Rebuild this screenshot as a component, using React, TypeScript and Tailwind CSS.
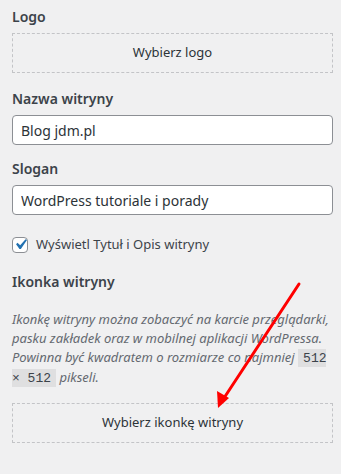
const Label = ({ children }: { children: React.ReactNode }) => (
  <div className="text-[14px] leading-[20px] font-semibold text-[#3c434a]">{children}</div>
);

const Picker = ({ children }: { children: React.ReactNode }) => (
  <div className="h-[40px] border border-dashed border-[#c3c4c7] flex items-center justify-center text-[13px] text-[#2c3338]">
    {children}
  </div>
);

const Field = ({ value }: { value: string }) => (
  <input
    readOnly
    value={value}
    className="w-full h-[30px] bg-white border border-[#8c8f94] rounded-[4px] px-[8px] text-[14px] text-[#2c3338] focus:outline-none"
  />
);

export default function App() {
  return (
    <div
      className="relative w-[341px] h-[474px] bg-[#f0f0f1] pl-[12px] pr-[8px] pt-[7px]"
      style={{ fontFamily: '"Noto Sans", "Open Sans", sans-serif' }}
    >
      <Label>Logo</Label>
      <div className="mt-[6px]">
        <Picker>Wybierz logo</Picker>
      </div>

      <div className="mt-[16px]">
        <Label>Nazwa witryny</Label>
      </div>
      <div className="mt-[6px]">
        <Field value="Blog jdm.pl" />
      </div>

      <div className="mt-[14px]">
        <Label>Slogan</Label>
      </div>
      <div className="mt-[6px]">
        <Field value="WordPress tutoriale i porady" />
      </div>

      <label className="mt-[20px] flex items-center gap-[8px] text-[13px] text-[#3c434a]">
        <span className="w-[16px] h-[16px] bg-white border border-[#8c8f94] rounded-[4px] flex items-center justify-center">
          <svg width="21" height="21" viewBox="0 0 20 20" className="-m-[3px] shrink-0">
            <path d="M14.83 4.89l1.34.94-5.81 8.38H9.02L5.78 9.67l1.34-1.25 2.57 2.4z" fill="#2271b1" />
          </svg>
        </span>
        Wyświetl Tytuł i Opis witryny
      </label>

      <div className="mt-[17px]">
        <Label>Ikonka witryny</Label>
      </div>
      <p className="mt-[18px] text-[13px] leading-[19px] italic text-[#646970]">
        Ikonkę witryny można zobaczyć na karcie przeglądarki, pasku zakładek oraz w mobilnej aplikacji WordPressa.
        Powinna być kwadratem o rozmiarze co najmniej{' '}
        <code
          className="not-italic bg-[#dfdfe0] px-[5px] pt-[2px] pb-[1px] text-[13px] text-[#3c434a]"
          style={{ fontFamily: '"Liberation Mono", monospace' }}
        >
          512 × 512
        </code>{' '}
        pikseli.
      </p>

      <div className="mt-[15px]">
        <Picker>Wybierz ikonkę witryny</Picker>
      </div>

      <svg className="absolute left-0 top-0 pointer-events-none" width="341" height="474">
        <line x1="299" y1="284" x2="224" y2="398" stroke="#ff0000" strokeWidth="3" strokeLinecap="round" />
        <polygon points="218,408 217,391 229,398" fill="#ff0000" />
      </svg>
    </div>
  );
}
